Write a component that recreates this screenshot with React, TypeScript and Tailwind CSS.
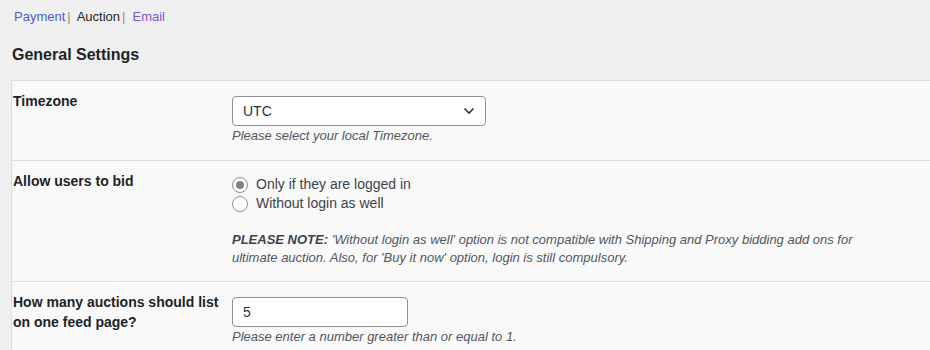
import React from "react";

const font = { fontFamily: '"Liberation Sans", Arial, sans-serif' };

function Radio({ checked, label }: { checked?: boolean; label: string }) {
  return (
    <label className="flex items-center h-[19px]">
      <span className="w-4 h-4 rounded-full border border-[#8c8f94] bg-white flex items-center justify-center shrink-0">
        {checked && <span className="w-2 h-2 rounded-full bg-[#7e8187]" />}
      </span>
      <span className="ml-[8px] text-[14px] text-[#3c434a]">{label}</span>
    </label>
  );
}

export default function App() {
  return (
    <div className="w-[930px] h-[350px] overflow-hidden bg-[#f0f0f1] text-[#3c434a]" style={font}>
      <div className="pl-[14px] pt-[8px] text-[13px] leading-[18px] flex items-center">
        <span className="text-[#4f5bd5]">Payment</span>
        <span className="text-[#a98a5a] ml-[2px]">|</span>
        <span className="text-[#1d2327] ml-[6px]">Auction</span>
        <span className="text-[#a98a5a] ml-[2px]">|</span>
        <span className="text-[#7a55e0] ml-[7px]">Email</span>
      </div>
      <h2 className="pl-[12px] mt-[18px] text-[16px] leading-[22px] font-bold text-[#1d2327]">General Settings</h2>
      <div className="ml-[11px] mt-[14px] w-[940px] border-l border-t border-[#dcdcde] bg-[#f9f9f9]">
        {/* Row 1 */}
        <div className="flex border-b border-[#dcdcde] h-[80px]">
          <div className="w-[220px] pl-[1px] pt-[10px] text-[14px] leading-[20px] font-bold text-[#1d2327]">Timezone</div>
          <div className="pt-[15px]">
            <div className="w-[254px] h-[30px] border border-[#8c8f94] rounded-[4px] bg-white flex items-center justify-between pl-[10px] pr-[10px] text-[14px] text-[#2c3338]">
              <span>UTC</span>
              <svg width="12" height="8" viewBox="0 0 12 8" fill="none">
                <path d="M1.5 1.5 L6 6 L10.5 1.5" stroke="#2c3338" strokeWidth="1.6" />
              </svg>
            </div>
            <div className="mt-[1px] text-[13px] leading-[18px] italic text-[#50575e]">Please select your local Timezone.</div>
          </div>
        </div>
        {/* Row 2 */}
        <div className="flex border-b border-[#dcdcde] h-[121px]">
          <div className="w-[220px] pl-[1px] pt-[10px] text-[14px] leading-[20px] font-bold text-[#1d2327]">Allow users to bid</div>
          <div className="pt-[14px]">
            <Radio checked label="Only if they are logged in" />
            <Radio label="Without login as well" />
            <div className="mt-[18px] text-[13px] leading-[18px] italic text-[#50575e] w-[640px]">
              <b className="text-[#3c434a]">PLEASE NOTE:</b> 'Without login as well' option is not compatible with Shipping and Proxy bidding add ons for ultimate auction. Also, for 'Buy it now' option, login is still compulsory.
            </div>
          </div>
        </div>
        {/* Row 3 */}
        <div className="flex h-[80px]">
          <div className="w-[220px] pl-[1px] pr-[8px] pt-[10px] text-[14px] leading-[20px] font-bold text-[#1d2327]">How many auctions should list on one feed page?</div>
          <div className="pt-[15px]">
            <div className="w-[176px] h-[30px] border border-[#8c8f94] rounded-[4px] bg-white flex items-center pl-[10px] text-[14px] text-[#2c3338]">5</div>
            <div className="mt-[1px] text-[13px] leading-[18px] italic text-[#50575e]">Please enter a number greater than or equal to 1.</div>
          </div>
        </div>
      </div>
    </div>
  );
}
